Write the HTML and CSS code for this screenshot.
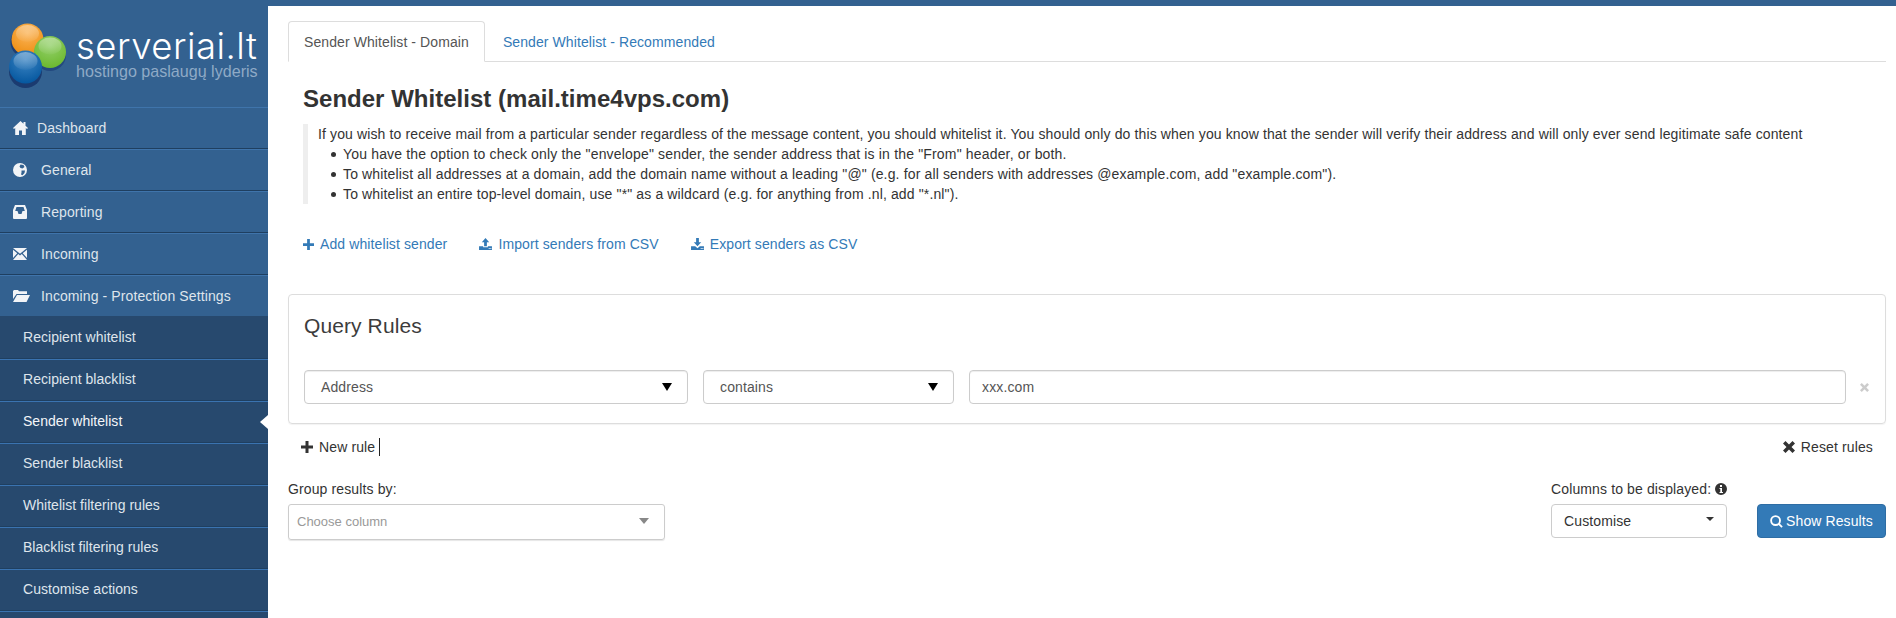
FILE: index.html
```html
<!DOCTYPE html>
<html lang="en">
<head>
<meta charset="utf-8">
<title>Sender Whitelist</title>
<link rel="stylesheet" href="styles.css">
</head>
<body>
<div class="topbar"></div>
<div class="shell">
  <aside class="sidebar">
    <div class="brand">
      <svg class="brand-mark" width="60" height="72" viewBox="0 0 60 72">
        <defs>
          <radialGradient id="go" cx="50%" cy="30%" r="70%"><stop offset="0" stop-color="#fbb55a"/><stop offset="1" stop-color="#ee8e12"/></radialGradient>
          <radialGradient id="gg" cx="50%" cy="30%" r="70%"><stop offset="0" stop-color="#93d06a"/><stop offset="1" stop-color="#6cb82f"/></radialGradient>
          <radialGradient id="gb" cx="50%" cy="28%" r="72%"><stop offset="0" stop-color="#3d86c4"/><stop offset="1" stop-color="#05579f"/></radialGradient>
          <linearGradient id="shine" x1="0" y1="0" x2="0" y2="1"><stop offset="0" stop-color="#fff" stop-opacity=".38"/><stop offset="1" stop-color="#fff" stop-opacity=".03"/></linearGradient>
        </defs>
        <circle cx="17.500" cy="19" r="16" fill="#1f3f73"/>
        <circle cx="18.500" cy="16.500" r="16" fill="url(#go)"/>
        <ellipse cx="18.500" cy="10.500" rx="11.500" ry="8.500" fill="url(#shine)"/>
        <circle cx="41" cy="32" r="16" fill="#24497f"/>
        <circle cx="41" cy="29" r="16" fill="url(#gg)"/>
        <ellipse cx="41" cy="23" rx="11.500" ry="8.500" fill="url(#shine)"/>
        <circle cx="16.500" cy="48.500" r="16.500" fill="#1b3b70"/>
        <circle cx="16.500" cy="44" r="16.500" fill="url(#gb)"/>
        <ellipse cx="16.500" cy="38" rx="12" ry="9" fill="url(#shine)"/>
      </svg>
      <div class="brand-text">
        <div class="brand-name">serveriai.lt</div>
        <div class="brand-tag">hostingo paslaugų lyderis</div>
      </div>
    </div>
    <nav class="menu">
      <a class="menu-item"><svg class="mi mi-home" viewBox="0 0 15 14"><path fill="currentColor" d="M7.500 0 0 7 1 8 2.200 7V14H6V9.500H9V14H12.800V7L14 8 15 7 12.500 4.700V1H10.500V2.800Z"/></svg><span>Dashboard</span></a>
      <a class="menu-item"><svg class="mi" viewBox="0 0 14 14"><path fill="currentColor" fill-rule="evenodd" d="M7 0a7 7 0 1 0 0 14A7 7 0 0 0 7 0ZM7.500 1.500 10.500 2 11.500 4 9.500 5.500 7.500 5 6.500 3.500ZM8.500 7.500 12 7.500 11.500 10 9.500 12.300 8 11.500 8.500 9.500Z"/></svg><span>General</span></a>
      <a class="menu-item"><svg class="mi" viewBox="0 0 14 14"><path fill="currentColor" fill-rule="evenodd" d="M2 0H12L14 5V13Q14 14 13 14H1Q0 14 0 13V5ZM3.500 2 2.200 6H4.500L5.500 9H8.500L9.500 6H11.800L10.500 2Z"/></svg><span>Reporting</span></a>
      <a class="menu-item"><svg class="mi mi-mail" viewBox="0 0 14 12"><path fill="currentColor" d="M0 0H14L7 5.800ZM0 1.800 4.300 5.200 0 10ZM14 1.800V10L9.700 5.200ZM5.200 6 7 7.500 8.800 6 14 12H0Z"/></svg><span>Incoming</span></a>
      <a class="menu-item menu-open"><svg class="mi mi-wide" viewBox="0 0 17 12"><path fill="currentColor" d="M0 1 1 0H5L6 1.300H14V4H3.500L0 9ZM4 5H17L13.500 12H0Z"/></svg><span>Incoming - Protection Settings</span></a>
      <a class="menu-item sub sub-first">Recipient whitelist</a>
      <a class="menu-item sub">Recipient blacklist</a>
      <a class="menu-item sub current">Sender whitelist</a>
      <a class="menu-item sub">Sender blacklist</a>
      <a class="menu-item sub">Whitelist filtering rules</a>
      <a class="menu-item sub">Blacklist filtering rules</a>
      <a class="menu-item sub">Customise actions</a>
      <a class="menu-item sub"></a>
    </nav>
  </aside>
  <main class="main">
    <ul class="tabs">
      <li class="tab active">Sender Whitelist - Domain</li>
      <li class="tab">Sender Whitelist - Recommended</li>
    </ul>
    <section class="intro">
      <h3 class="title">Sender Whitelist (mail.time4vps.com)</h3>
      <div class="note">
        If you wish to receive mail from a particular sender regardless of the message content, you should whitelist it. You should only do this when you know that the sender will verify their address and will only ever send legitimate safe content
        <ul class="note-list">
          <li class="note-a">You have the option to check only the "envelope" sender, the sender address that is in the "From" header, or both.</li>
          <li class="note-b">To whitelist all addresses at a domain, add the domain name without a leading "@" (e.g. for all senders with addresses @example.com, add "example.com").</li>
          <li class="note-c">To whitelist an entire top-level domain, use "*" as a wildcard (e.g. for anything from .nl, add "*.nl").</li>
        </ul>
      </div>
      <div class="actions">
        <a class="action"><svg class="ai ai-plus" viewBox="0 0 12 12"><path fill="currentColor" d="M4.500 0H7.500V4.500H12V7.500H7.500V12H4.500V7.500H0V4.500H4.500Z"/></svg>Add whitelist sender</a>
        <a class="action"><svg class="ai" viewBox="0 0 14 13"><path fill="currentColor" fill-rule="evenodd" d="M7 0 11 4.500H8.500V9H5.500V4.500H3ZM0 9H4.500V10H9.500V9H14V13H0ZM10.500 10.800V11.800H11.500V10.800ZM12.300 10.800V11.800H13.300V10.800Z"/></svg>Import senders from CSV</a>
        <a class="action"><svg class="ai" viewBox="0 0 14 13"><path fill="currentColor" fill-rule="evenodd" d="M5.500 0H8.500V4.500H11L7 9 3 4.500H5.500ZM0 9H4.500L7 11 9.500 9H14V13H0ZM10.500 10.800V11.800H11.500V10.800ZM12.300 10.800V11.800H13.300V10.800Z"/></svg>Export senders as CSV</a>
      </div>
    </section>
    <section class="panel">
      <h4 class="panel-title">Query Rules</h4>
      <div class="rule">
        <div class="field field-attr"><span>Address</span><i class="tri"></i></div>
        <div class="field field-op"><span>contains</span><i class="tri"></i></div>
        <div class="field field-value">xxx.com</div>
        <svg class="rule-x" viewBox="0 0 10 10"><path fill="currentColor" d="M2 0 5 3 8 0 10 2 7 5 10 8 8 10 5 7 2 10 0 8 3 5 0 2Z"/></svg>
      </div>
    </section>
    <div class="rule-tools">
      <a class="tool"><svg class="ti" viewBox="0 0 12 12"><path fill="currentColor" d="M4.500 0H7.500V4.500H12V7.500H7.500V12H4.500V7.500H0V4.500H4.500Z"/></svg>New rule<i class="caret-bar"></i></a>
      <a class="tool"><svg class="ti" viewBox="0 0 12 12"><path fill="currentColor" d="M2.500 0 6 3.500 9.500 0 12 2.500 8.500 6 12 9.500 9.500 12 6 8.500 2.500 12 0 9.500 3.500 6 0 2.500Z"/></svg>Reset rules</a>
    </div>
    <div class="results">
      <div class="group">
        <label class="lbl">Group results by:</label>
        <div class="chooser"><span>Choose column</span><i class="tri-grey"></i></div>
      </div>
      <div class="columns">
        <label class="lbl lbl-cols">Columns to be displayed: <svg class="info" viewBox="0 0 12 12"><path fill="currentColor" fill-rule="evenodd" d="M6 0a6 6 0 1 0 0 12A6 6 0 0 0 6 0ZM5 2H7V4H5ZM4.500 5H7V9H8V10H4.500V9H5.300V6H4.500Z"/></svg></label>
        <div class="custom"><span>Customise</span><i class="tri-small"></i></div>
      </div>
      <a class="btn"><svg class="bi" viewBox="0 0 14 14"><path fill="none" stroke="currentColor" stroke-width="2" d="M6 1.200a4.800 4.800 0 1 0 0 9.600 4.800 4.800 0 0 0 0-9.600ZM9.500 9.500 13 13"/></svg>Show Results</a>
    </div>
  </main>
</div>
</body>
</html>
```
FILE: styles.css
```css
* { box-sizing: border-box; }
html, body { margin: 0; height: 618px; overflow: hidden; background: #fff; }
body { font-family: "Liberation Sans", Arial, sans-serif; font-size: 14px; line-height: 20px; color: #333; letter-spacing: .125px; }
.topbar { height: 6px; background: #336190; }
.shell { display: flex; height: 612px; overflow: hidden; }

.sidebar { width: 268px; flex: none; background: #336190; color: #e3e8ee; letter-spacing: .1px; }
.brand { height: 101px; display: flex; padding: 17px 0 0 9px; }
.brand-mark { flex: none; }
.brand-text { margin-left: 7px; padding-top: 6px; }
.brand-name { font-family: "Inter", sans-serif; font-weight: 300; font-size: 36.500px; line-height: 34px; letter-spacing: .5px; color: #fff; white-space: nowrap; }
.brand-tag { font-size: 16.100px; line-height: 16px; letter-spacing: 0; color: #8faac6; white-space: nowrap; }

.menu { display: flex; flex-direction: column; }
.menu-item { height: 42px; display: flex; align-items: center; padding-left: 13px; border-top: 1px solid #3f74ab; border-bottom: 1px solid #1f3f60; color: #dfe5ec; white-space: nowrap; }
.mi { width: 14px; height: 14px; margin-right: 14px; color: #f2f4f7; flex: none; }
.mi-home { width: 15px; margin-right: 9px; }
.mi-mail { height: 12px; }
.mi-wide { width: 17px; height: 12px; margin-right: 11px; }
.menu-open { border-bottom-color: #27496e; }
.sub { background: #27496e; padding-left: 23px; padding-bottom: 2px; position: relative; border-top-color: #3a73b0; letter-spacing: .03px; }
.sub-first { border-top-color: #27496e; }
.current { color: #f4f6f9; }
.current::after { content: ""; position: absolute; right: 0; top: 13px; border: 7px solid transparent; border-left: 0; border-right: 8px solid #fff; }

.main { flex: 1; min-width: 0; padding: 15px 10px 0 20px; }
.tabs { display: flex; list-style: none; margin: 0; padding: 0; height: 41px; border-bottom: 1px solid #ddd; letter-spacing: .09px; }
.tab { height: 41px; padding: 10px 15px; color: #337ab7; border: 1px solid transparent; margin-right: 2px; }
.tab.active { color: #555; border-color: #ddd #ddd #fff; border-radius: 4px 4px 0 0; background: #fff; }

.intro { padding: 0 15px; }
.title { margin: 24px 0 12px; font-size: 24px; line-height: 26px; font-weight: 700; letter-spacing: .02px; color: #333; }
.note { border-left: 5px solid #eee; padding-left: 10px; height: 80px; }
.note-list { margin: 0; padding-left: 25px; list-style: none; }
.note-list li { position: relative; }
.note-list li::before { content: ""; position: absolute; left: -12px; top: 8px; width: 5px; height: 5px; border-radius: 50%; background: #333; }
.note-a { letter-spacing: .17px; }
.note-b { letter-spacing: .145px; }
.note-c { letter-spacing: .13px; }
.actions { display: flex; margin-top: 30px; height: 20px; letter-spacing: .105px; }
.action { color: #337ab7; display: flex; align-items: center; margin-right: 32px; }
.ai { width: 13px; height: 12px; margin-right: 6px; flex: none; }
.ai-plus { width: 11px; height: 11px; }

.panel { margin-top: 40px; height: 130px; border: 1px solid #ddd; border-radius: 4px; padding: 20px 15px 0; box-shadow: 0 1px 1px rgba(0, 0, 0, .05); }
.panel-title { margin: 0; font-size: 21px; line-height: 22px; font-weight: 400; letter-spacing: .1px; color: #3c3c3c; }
.rule { display: flex; align-items: center; margin-top: 33px; }
.field { height: 34px; border: 1px solid #ccc; border-radius: 4px; display: flex; align-items: center; justify-content: space-between; color: #555; box-shadow: inset 0 1px 1px rgba(0, 0, 0, .075); flex: none; }
.field-attr { width: 384px; padding: 0 15px 0 16px; margin-right: 15px; }
.field-op { width: 251px; padding: 0 15px 0 16px; margin-right: 15px; }
.field-value { flex: 1; min-width: 0; padding: 0 12px; }
.tri { width: 0; height: 0; border: 5px solid transparent; border-bottom: 0; border-top: 8px solid #000; }
.rule-x { width: 9px; height: 9px; color: #ccc; margin-left: 14px; margin-right: 1px; flex: none; }

.rule-tools { display: flex; justify-content: space-between; padding: 13px 13px 0 13px; height: 52px; }
.tool { display: flex; align-items: center; height: 20px; color: #333; }
.ti { width: 12px; height: 12px; margin-right: 6px; flex: none; }
.caret-bar { width: 1px; height: 18px; background: #222; margin-left: 4px; }

.results { display: flex; align-items: flex-start; }
.group { width: 377px; margin-right: auto; }
.lbl { display: block; height: 20px; margin: 3px 0 5px; white-space: nowrap; }
.chooser { height: 36px; border: 1px solid #ccc; border-radius: 3px; display: flex; align-items: center; justify-content: space-between; padding: 0 15px 0 8px; font-size: 13px; letter-spacing: 0; color: #999; box-shadow: 0 1px 1px rgba(0, 0, 0, .1); }
.tri-grey { width: 0; height: 0; margin-top: -2px; border: 5px solid transparent; border-bottom: 0; border-top: 6px solid #888; }
.columns { width: 176px; margin-right: 30px; }
.info { width: 12px; height: 12px; vertical-align: -1px; }
.custom { height: 34px; border: 1px solid #ccc; border-radius: 4px; display: flex; align-items: center; justify-content: space-between; padding: 0 12px; color: #333; }
.tri-small { width: 0; height: 0; margin-top: -4px; border: 4px solid transparent; border-bottom: 0; border-top: 4px solid #333; }
.btn { width: 129px; height: 34px; margin-top: 28px; background: #337ab7; border: 1px solid #2e6da4; border-radius: 4px; color: #fff; display: flex; align-items: center; justify-content: center; white-space: nowrap; letter-spacing: .1px; }
.bi { width: 13px; height: 13px; margin-right: 3px; flex: none; }
```
